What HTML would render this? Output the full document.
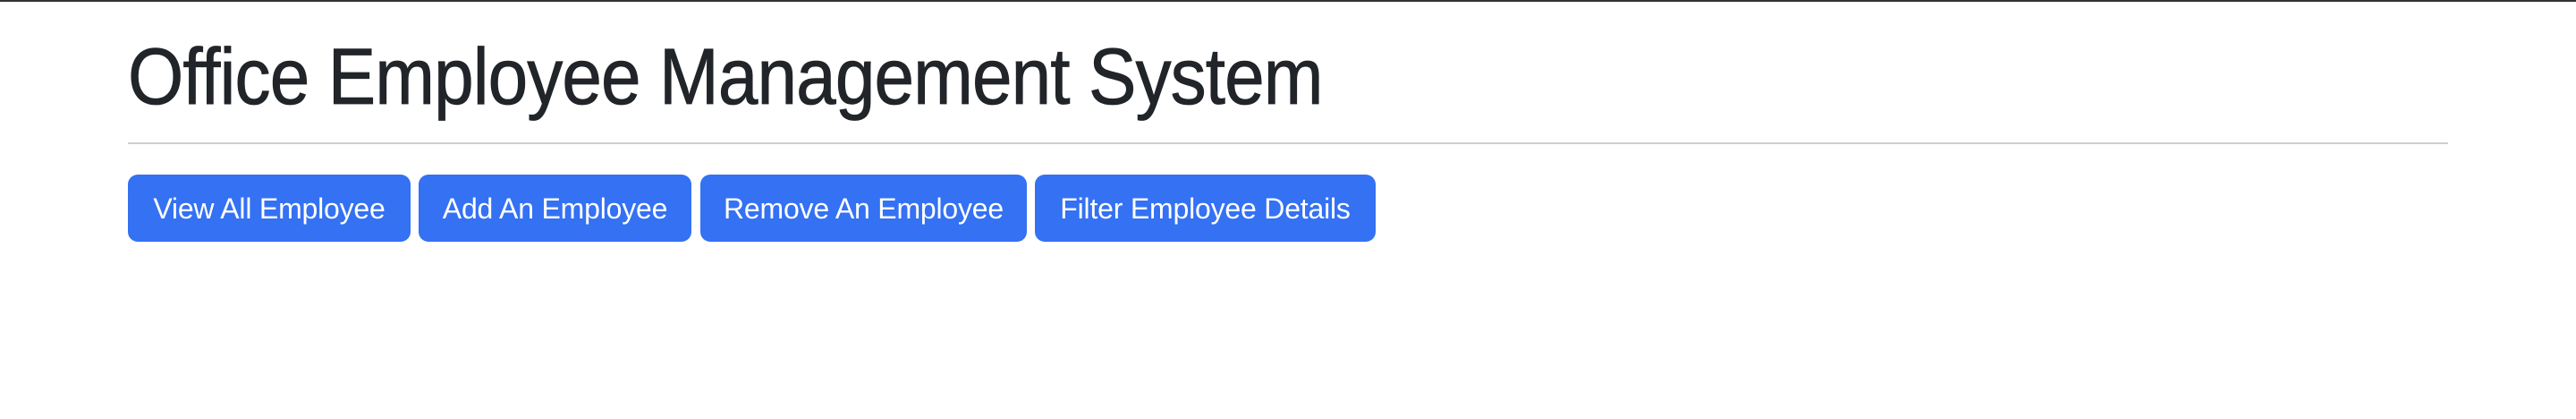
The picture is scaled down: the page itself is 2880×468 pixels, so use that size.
<!DOCTYPE html>
<html><head><meta charset="utf-8"><style>
html,body{margin:0;padding:0;background:#fff;width:2880px;height:468px;overflow:hidden;font-family:"Liberation Sans",sans-serif;}
.top{position:absolute;left:0;top:0;width:2880px;height:2px;background:#333;}
h1{position:absolute;left:143px;top:30px;margin:0;font-weight:400;font-size:89px;line-height:110px;color:#212529;letter-spacing:-1px;white-space:nowrap;transform:scaleX(0.9);transform-origin:0 0;-webkit-text-stroke:0.8px #212529;}
.hr{position:absolute;left:143px;top:159px;width:2594px;height:2px;background:#cfcfcf;}
.b{position:absolute;top:195px;height:75px;background:#3471f3;color:#fff;border-radius:11px;font-size:32px;line-height:77px;text-align:center;white-space:nowrap;letter-spacing:-0.2px;}
</style></head><body>
<div class="top"></div>
<h1>Office Employee Management System</h1>
<div class="hr"></div>
<div class="b" style="left:143px;width:316px">View All Employee</div>
<div class="b" style="left:468px;width:305px">Add An Employee</div>
<div class="b" style="left:783px;width:365px">Remove An Employee</div>
<div class="b" style="left:1157px;width:381px">Filter Employee Details</div>
</body></html>
